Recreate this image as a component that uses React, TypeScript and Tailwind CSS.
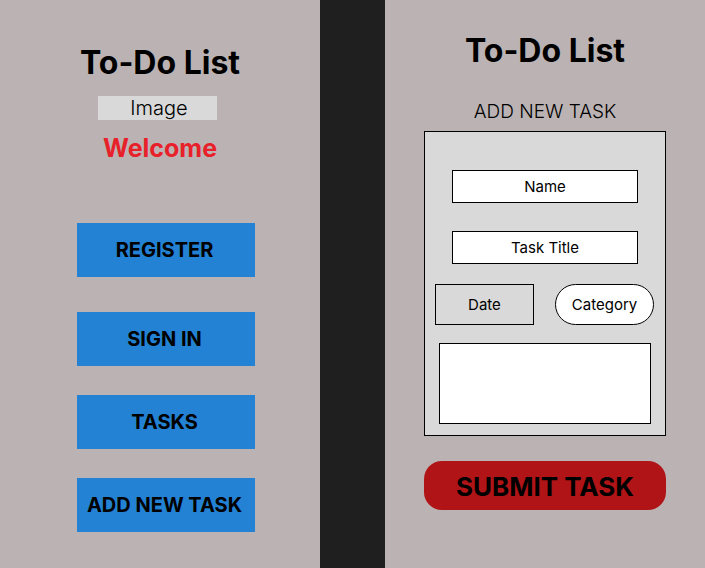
const font = { fontFamily: "Inter, 'Noto Sans', sans-serif" };

const MenuButton = ({ label, className }: { label: string; className?: string }) => (
  <div
    className={`self-start ml-[77px] w-[178px] h-[54px] bg-[#2382d4] flex items-center justify-center pr-[3px] text-[20px] font-bold text-black whitespace-nowrap ${className ?? ""}`}
  >
    {label}
  </div>
);

export default function App() {
  return (
    <div className="flex w-[705px] h-[568px] bg-[#bbb3b3] text-black" style={font}>
      {/* Panel izquierdo */}
      <div className="w-[320px] h-full flex flex-col items-center">
        <h1 className="mt-[44px] text-[32px] leading-[38px] font-bold">To-Do List</h1>
        <div className="self-start ml-[98px] mt-[14px] w-[119px] h-[24px] bg-[#d9d9d9] flex items-center justify-center pl-[3px] text-[20px] font-light">
          Image
        </div>
        <p className="mt-[13px] text-[25px] leading-[30px] font-bold text-[#e8202a]">Welcome</p>
        <MenuButton label="REGISTER" className="mt-[60px]" />
        <MenuButton label="SIGN IN" className="mt-[35px]" />
        <MenuButton label="TASKS" className="mt-[29px]" />
        <MenuButton label="ADD NEW TASK" className="mt-[29px]" />
      </div>

      {/* Separador */}
      <div className="w-[65px] h-full bg-[#1f1f1f]" />

      {/* Panel derecho */}
      <div className="w-[320px] h-full flex flex-col items-center">
        <h1 className="mt-[32px] text-[32px] leading-[38px] font-bold">To-Do List</h1>
        <p className="mt-[30px] text-[19px] leading-[23px] font-light">ADD NEW TASK</p>
        <div className="mt-[8px] w-[242px] h-[305px] bg-[#d9d9d9] border border-black flex flex-col items-center pt-[38px]">
          <div className="w-[186px] h-[33px] bg-white border border-black flex items-center justify-center pt-[2px] text-[15px]">
            Name
          </div>
          <div className="mt-[28px] w-[186px] h-[33px] bg-white border border-black flex items-center justify-center pt-[2px] text-[15px]">
            Task Title
          </div>
          <div className="mt-[20px] w-full flex justify-between pl-[10px] pr-[11px]">
            <div className="w-[99px] h-[41px] border border-black flex items-center justify-center pt-[2px] text-[15px]">
              Date
            </div>
            <div className="w-[99px] h-[41px] bg-white border border-black rounded-full flex items-center justify-center pt-[2px] text-[15px]">
              Category
            </div>
          </div>
          <div className="mt-[18px] w-[212px] h-[81px] bg-white border border-black" />
        </div>
        <div className="mt-[25px] w-[242px] h-[49px] bg-[#b01416] rounded-[18px] flex items-center justify-center pt-[1px] text-[26px] font-bold">
          SUBMIT TASK
        </div>
      </div>
    </div>
  );
}
